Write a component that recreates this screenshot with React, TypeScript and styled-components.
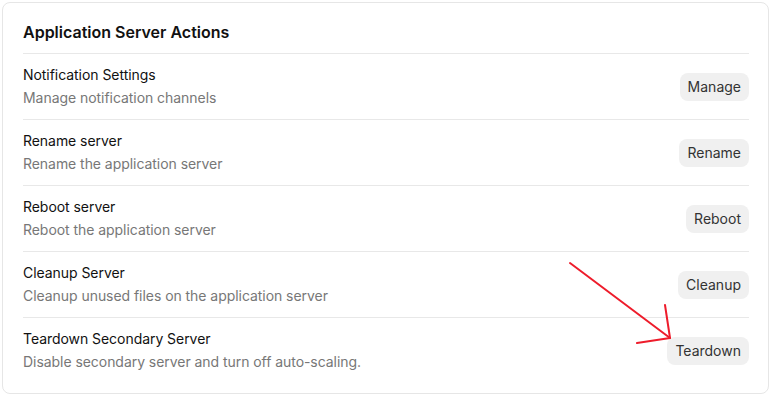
import styled, { createGlobalStyle } from "styled-components";

const GlobalStyle = createGlobalStyle`
  body {
    margin: 0;
    background: #ffffff;
    font-family: Inter, "Noto Sans", sans-serif;
    -webkit-font-smoothing: antialiased;
  }
`;

const Page = styled.div`
  padding: 2px 3px 0 2px;
  position: relative;
`;

const Card = styled.section`
  border: 1px solid #e6e6e6;
  border-radius: 8px;
  padding: 19px 19px 10px 20px;
  background: #fff;
`;

const Title = styled.h2`
  margin: 0;
  font-size: 16px;
  line-height: 20px;
  font-weight: 600;
  color: #111;
  padding-bottom: 11px;
  border-bottom: 1px solid #e8e8e8;
`;

const Row = styled.div<{ $last?: boolean }>`
  display: flex;
  align-items: center;
  justify-content: space-between;
  padding: 11px 0;
  border-bottom: ${(p) => (p.$last ? "none" : "1px solid #e8e8e8")};
`;

const Text = styled.div`
  display: flex;
  flex-direction: column;
  gap: 3px;
`;

const Label = styled.span`
  font-size: 14px;
  line-height: 20px;
  color: #111;
  letter-spacing: -0.05px;
`;

const Hint = styled.span`
  font-size: 14px;
  line-height: 20px;
  color: #777;
  letter-spacing: -0.05px;
`;

const Button = styled.button`
  height: 28px;
  padding: 0 8px;
  border: none;
  border-radius: 8px;
  background: #f0f0f0;
  color: #333;
  font-family: inherit;
  font-size: 14px;
`;

const Arrow = styled.svg`
  position: absolute;
  left: 0;
  top: 0;
  pointer-events: none;
`;

const actions = [
  { label: "Notification Settings", hint: "Manage notification channels", button: "Manage" },
  { label: "Rename server", hint: "Rename the application server", button: "Rename" },
  { label: "Reboot server", hint: "Reboot the application server", button: "Reboot" },
  { label: "Cleanup Server", hint: "Cleanup unused files on the application server", button: "Cleanup" },
  { label: "Teardown Secondary Server", hint: "Disable secondary server and turn off auto-scaling.", button: "Teardown" },
];

export default function App() {
  return (
    <Page>
      <GlobalStyle />
      <Card>
        <Title>Application Server Actions</Title>
        {actions.map((a, i) => (
          <Row key={a.label} $last={i === actions.length - 1}>
            <Text>
              <Label>{a.label}</Label>
              <Hint>{a.hint}</Hint>
            </Text>
            <Button>{a.button}</Button>
          </Row>
        ))}
      </Card>
      <Arrow width="772" height="395" viewBox="0 0 772 395">
        <g stroke="#ee1c2b" strokeWidth="2" strokeLinecap="round" fill="none">
          <line x1="570" y1="263" x2="670" y2="338" />
          <line x1="665" y1="305" x2="670" y2="338" />
          <line x1="637" y1="343" x2="670" y2="338" />
        </g>
      </Arrow>
    </Page>
  );
}
